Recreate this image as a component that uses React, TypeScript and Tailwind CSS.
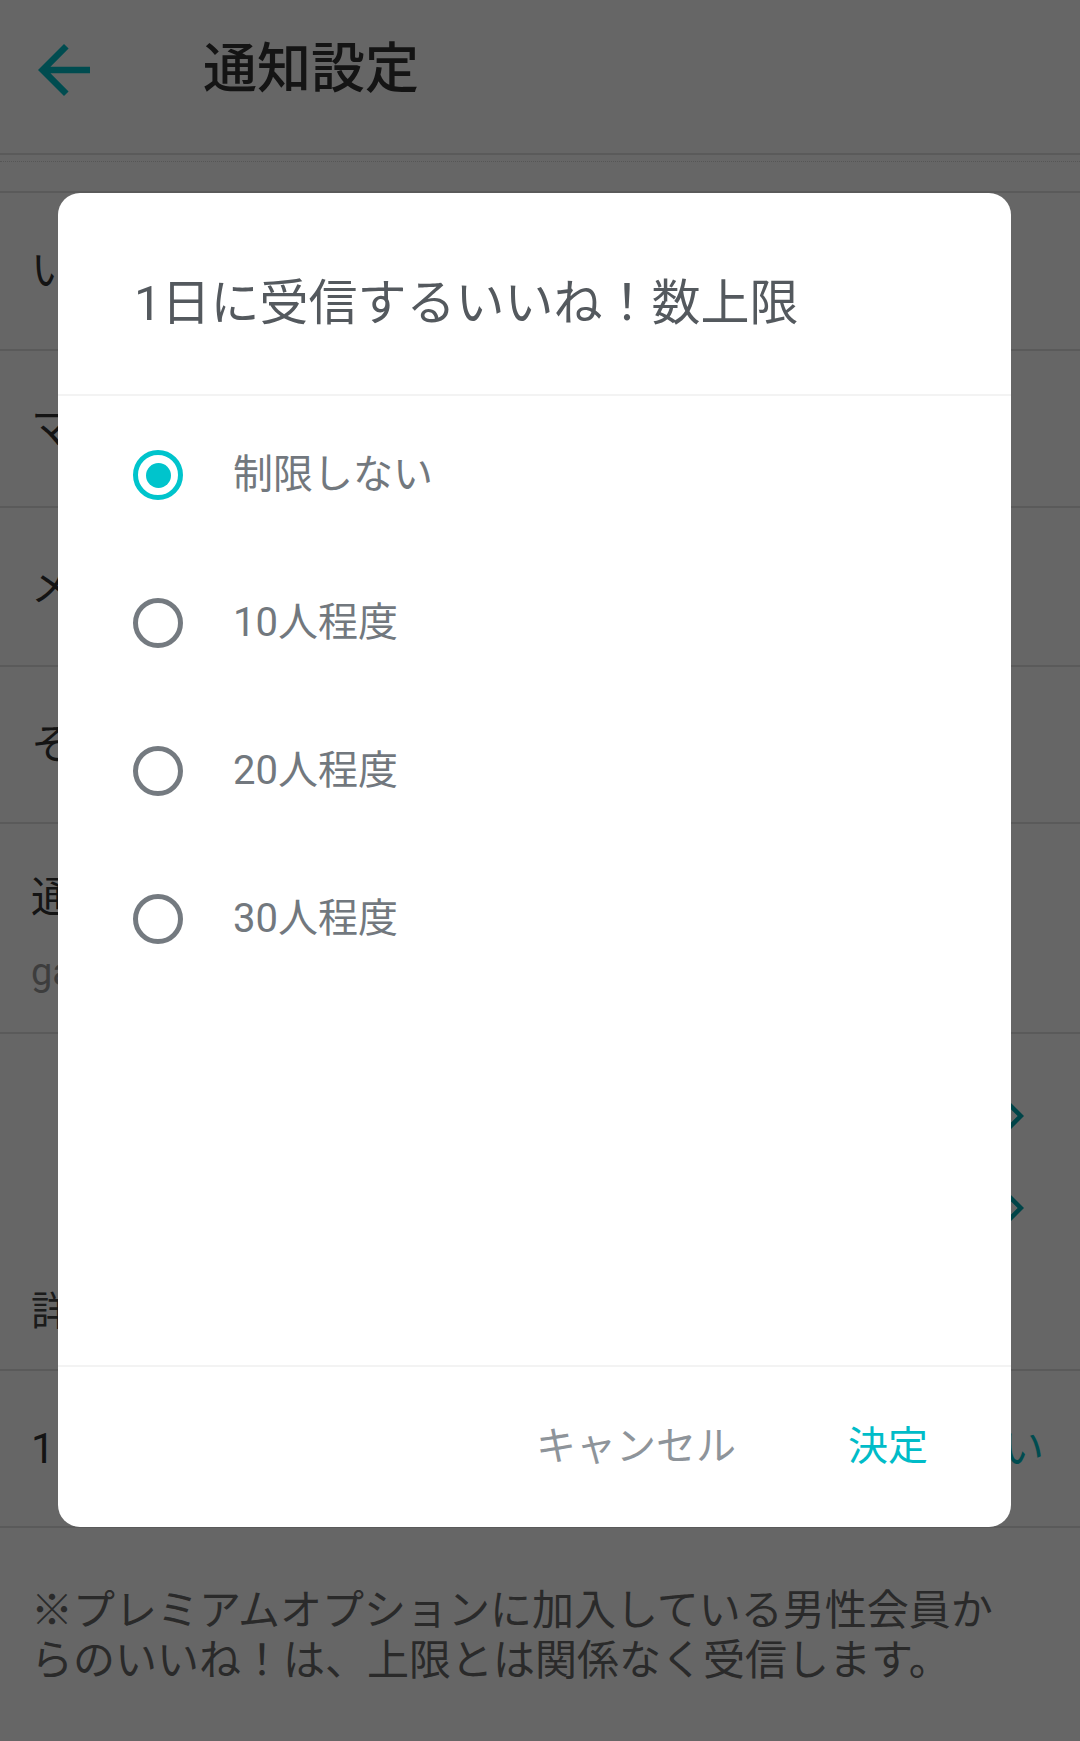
import React, { useState } from "react";

const FONT = { fontFamily: '"Roboto", "Noto Sans CJK JP", sans-serif' };

const options = ["制限しない", "10人程度", "20人程度", "30人程度"];

const BackArrow: React.FC = () => (
  <svg width="78" height="78" viewBox="0 0 24 24" className="fill-[#00bfc8]">
    <path d="M20 11H7.83l5.59-5.59L12 4l-8 8 8 8 1.41-1.41L7.83 13H20v-2z" />
  </svg>
);

const Chevron: React.FC = () => (
  <svg width="54" height="54" viewBox="0 0 24 24" className="fill-[#00aab4]">
    <path d="M8.59 16.59 13.17 12 8.59 7.41 10 6l6 6-6 6-1.41-1.41z" />
  </svg>
);

const Radio: React.FC<{ checked: boolean }> = ({ checked }) => (
  <span
    className={
      checked
        ? "flex h-[50px] w-[50px] items-center justify-center rounded-full border-[5px] border-[#00c4cc]"
        : "flex h-[50px] w-[50px] items-center justify-center rounded-full border-[5px] border-[#747a80]"
    }
  >
    {checked && <span className="h-[25px] w-[25px] rounded-full bg-[#00c4cc]" />}
  </span>
);

const Row: React.FC<{ title: string; sub?: string; h: string; value?: string }> = ({
  title,
  sub,
  h,
  value,
}) => (
  <div className={`${h} flex items-center justify-between border-b-2 border-[#e2e2e2] pl-[31px] pr-[36px]`}>
    <div className={sub ? "flex flex-col pt-[14px]" : "flex flex-col"}>
      <span className={sub ? "text-[42px] leading-[74px] text-[#333]" : "text-[42px] leading-[56px] text-[#333]"}>
        {title}
      </span>
      {sub && <span className="text-[38px] leading-[74px] text-[#999]">{sub}</span>}
    </div>
    {value && <span className="text-[42px] text-[#00bfc8]">{value}</span>}
  </div>
);

const App: React.FC = () => {
  const [selected, setSelected] = useState(0);

  return (
    <div className="relative h-[1741px] w-[1080px] overflow-hidden bg-white" style={FONT}>
      {/* page under the dialog */}
      <div className="flex h-[155px] items-center border-b-2 border-[#e0e0e0] pb-[14px] pl-[25px]">
        <BackArrow />
        <h1 className="ml-[100px] text-[54px] font-medium text-[#333]">通知設定</h1>
      </div>
      <div className="h-[38px] border-b-2 border-[#e2e2e2] pt-[6px]">
        <div className="border-t border-dotted border-[#d8d8d8]" />
      </div>
      <Row h="h-[158px]" title="いいね！" />
      <Row h="h-[157px]" title="マッチング" />
      <Row h="h-[159px]" title="メッセージ" />
      <Row h="h-[157px]" title="その他のお知らせ" />
      <Row h="h-[210px]" title="通知先メールアドレス" sub="gaiden@example.com" />
      <div className="flex h-[337px] flex-col border-b-2 border-[#e2e2e2]">
        <div className="mt-[36px] flex h-[92px] items-center justify-end gap-1 pr-[38px]">
          <span className="text-[38px] text-[#00bfc8]">通知が届かない場合</span>
          <Chevron />
        </div>
        <div className="flex h-[92px] items-center justify-end gap-1 pr-[38px]">
          <span className="text-[38px] text-[#00bfc8]">通知音の設定について</span>
          <Chevron />
        </div>
        <div className="flex flex-1 items-center pl-[31px]">
          <span className="text-[40px] text-[#444]">詳細設定</span>
        </div>
      </div>
      <Row h="h-[157px]" title="1日に受信するいいね！数上限" value="制限しない" />
      <p className="pl-[31px] pr-[60px] pt-[58px] text-[42px] leading-[50px] text-[#6a6a6a]">
        ※プレミアムオプションに加入している男性会員からのいいね！は、上限とは関係なく受信します。
      </p>

      {/* dim + dialog */}
      <div className="absolute inset-0 bg-black/60">
        <div className="ml-[58px] mt-[193px] flex h-[1334px] w-[953px] flex-col rounded-[22px] bg-white">
          <div className="flex h-[203px] items-center border-b-2 border-[#f3f3f3] pl-[76px] pt-[20px]">
            <h2 className="text-[49px] text-[#54595e]">1日に受信するいいね！数上限</h2>
          </div>
          <div className="flex flex-1 flex-col pt-[5px]">
            {options.map((o, i) => (
              <button
                key={o}
                onClick={() => setSelected(i)}
                className="flex h-[148px] items-center gap-[50px] pl-[75px] text-left"
              >
                <Radio checked={selected === i} />
                <span className="text-[40px] text-[#72787e]">{o}</span>
              </button>
            ))}
          </div>
          <div className="flex h-[162px] items-center justify-end gap-[112px] border-t-2 border-[#f3f3f3] pr-[83px]">
            <button className="text-[40px] text-[#8e949a]">キャンセル</button>
            <button className="text-[40px] text-[#00bcc8]">決定</button>
          </div>
        </div>
      </div>
    </div>
  );
};

export default App;
